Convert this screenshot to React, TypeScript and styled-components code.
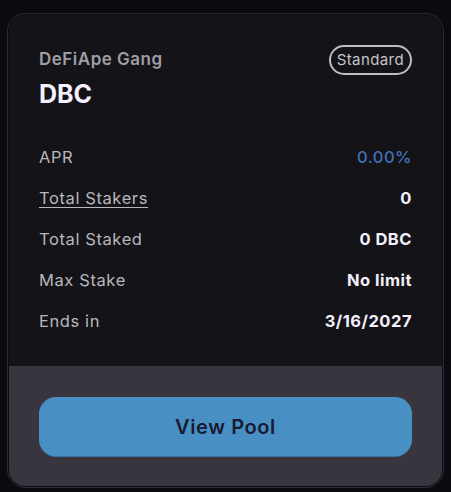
import React from 'react';
import styled, { createGlobalStyle } from 'styled-components';

const GlobalStyle = createGlobalStyle`
  html, body {
    margin: 0;
    padding: 0;
    background: #0b0a10;
    font-family: 'Inter', 'Noto Sans', sans-serif;
  }
`;

const Page = styled.div`
  padding: 13px 7px 4px 7px;
`;

const Card = styled.div`
  border: 1px solid #2c2b31;
  border-radius: 18px;
  padding: 1px;
  background: #0e0d12;
`;

const Inner = styled.div`
  border-radius: 16px;
  overflow: hidden;
  background: #141318;
`;

const Body = styled.div`
  padding: 30px 30px 34px 30px;
`;

const Header = styled.div`
  display: flex;
  justify-content: space-between;
  align-items: flex-start;
`;

const Titles = styled.div`
  display: flex;
  flex-direction: column;
  gap: 10px;
  padding-top: 4px;
`;

const Project = styled.div`
  font-size: 17px;
  font-weight: 600;
  color: #a09fa5;
  letter-spacing: 0.5px;
`;

const Token = styled.div`
  font-size: 25px;
  font-weight: 700;
  color: #f5f1ff;
  line-height: 1.2;
`;

const Badge = styled.div`
  border: 2px solid #bdbcc3;
  border-radius: 15px;
  padding: 4px 6px;
  font-size: 15px;
  color: #c4c3c9;
  line-height: 18px;
  letter-spacing: 0.4px;
`;

const Stats = styled.div`
  display: flex;
  flex-direction: column;
  gap: 19px;
  margin-top: 37px;
`;

const Row = styled.div`
  display: flex;
  justify-content: space-between;
  align-items: center;
  font-size: 16.5px;
  line-height: 22px;
`;

const Label = styled.span<{ $link?: boolean }>`
  color: #b9b7be;
  text-decoration: ${(p) => (p.$link ? 'underline' : 'none')};
  text-underline-offset: 3px;
  text-decoration-thickness: 1px;
  letter-spacing: 0.6px;
`;

const Value = styled.span<{ $accent?: boolean }>`
  font-weight: ${(p) => (p.$accent ? 500 : 700)};
  color: ${(p) => (p.$accent ? '#3f72b8' : '#f3f0fb')};
  letter-spacing: 0.5px;
`;

const Footer = styled.div`
  background: #38353f;
  padding: 31px 30px 30px 30px;
`;

const Button = styled.button`
  width: 100%;
  height: 59px;
  border: none;
  border-radius: 17px;
  background: #4890c4;
  box-shadow: 0 1px 0 #3a74a6;
  color: #1a1a33;
  font-family: inherit;
  font-size: 20px;
  font-weight: 600;
  letter-spacing: 0.6px;
  cursor: pointer;
`;

const stats = [
  { label: 'APR', value: '0.00%', accent: true },
  { label: 'Total Stakers', value: '0', link: true },
  { label: 'Total Staked', value: '0 DBC' },
  { label: 'Max Stake', value: 'No limit' },
  { label: 'Ends in', value: '3/16/2027' },
];

export default function App() {
  return (
    <>
      <GlobalStyle />
      <Page>
        <Card>
          <Inner>
            <Body>
              <Header>
                <Titles>
                  <Project>DeFiApe Gang</Project>
                  <Token>DBC</Token>
                </Titles>
                <Badge>Standard</Badge>
              </Header>
              <Stats>
                {stats.map((s) => (
                  <Row key={s.label}>
                    <Label $link={s.link}>{s.label}</Label>
                    <Value $accent={s.accent}>{s.value}</Value>
                  </Row>
                ))}
              </Stats>
            </Body>
            <Footer>
              <Button>View Pool</Button>
            </Footer>
          </Inner>
        </Card>
      </Page>
    </>
  );
}
